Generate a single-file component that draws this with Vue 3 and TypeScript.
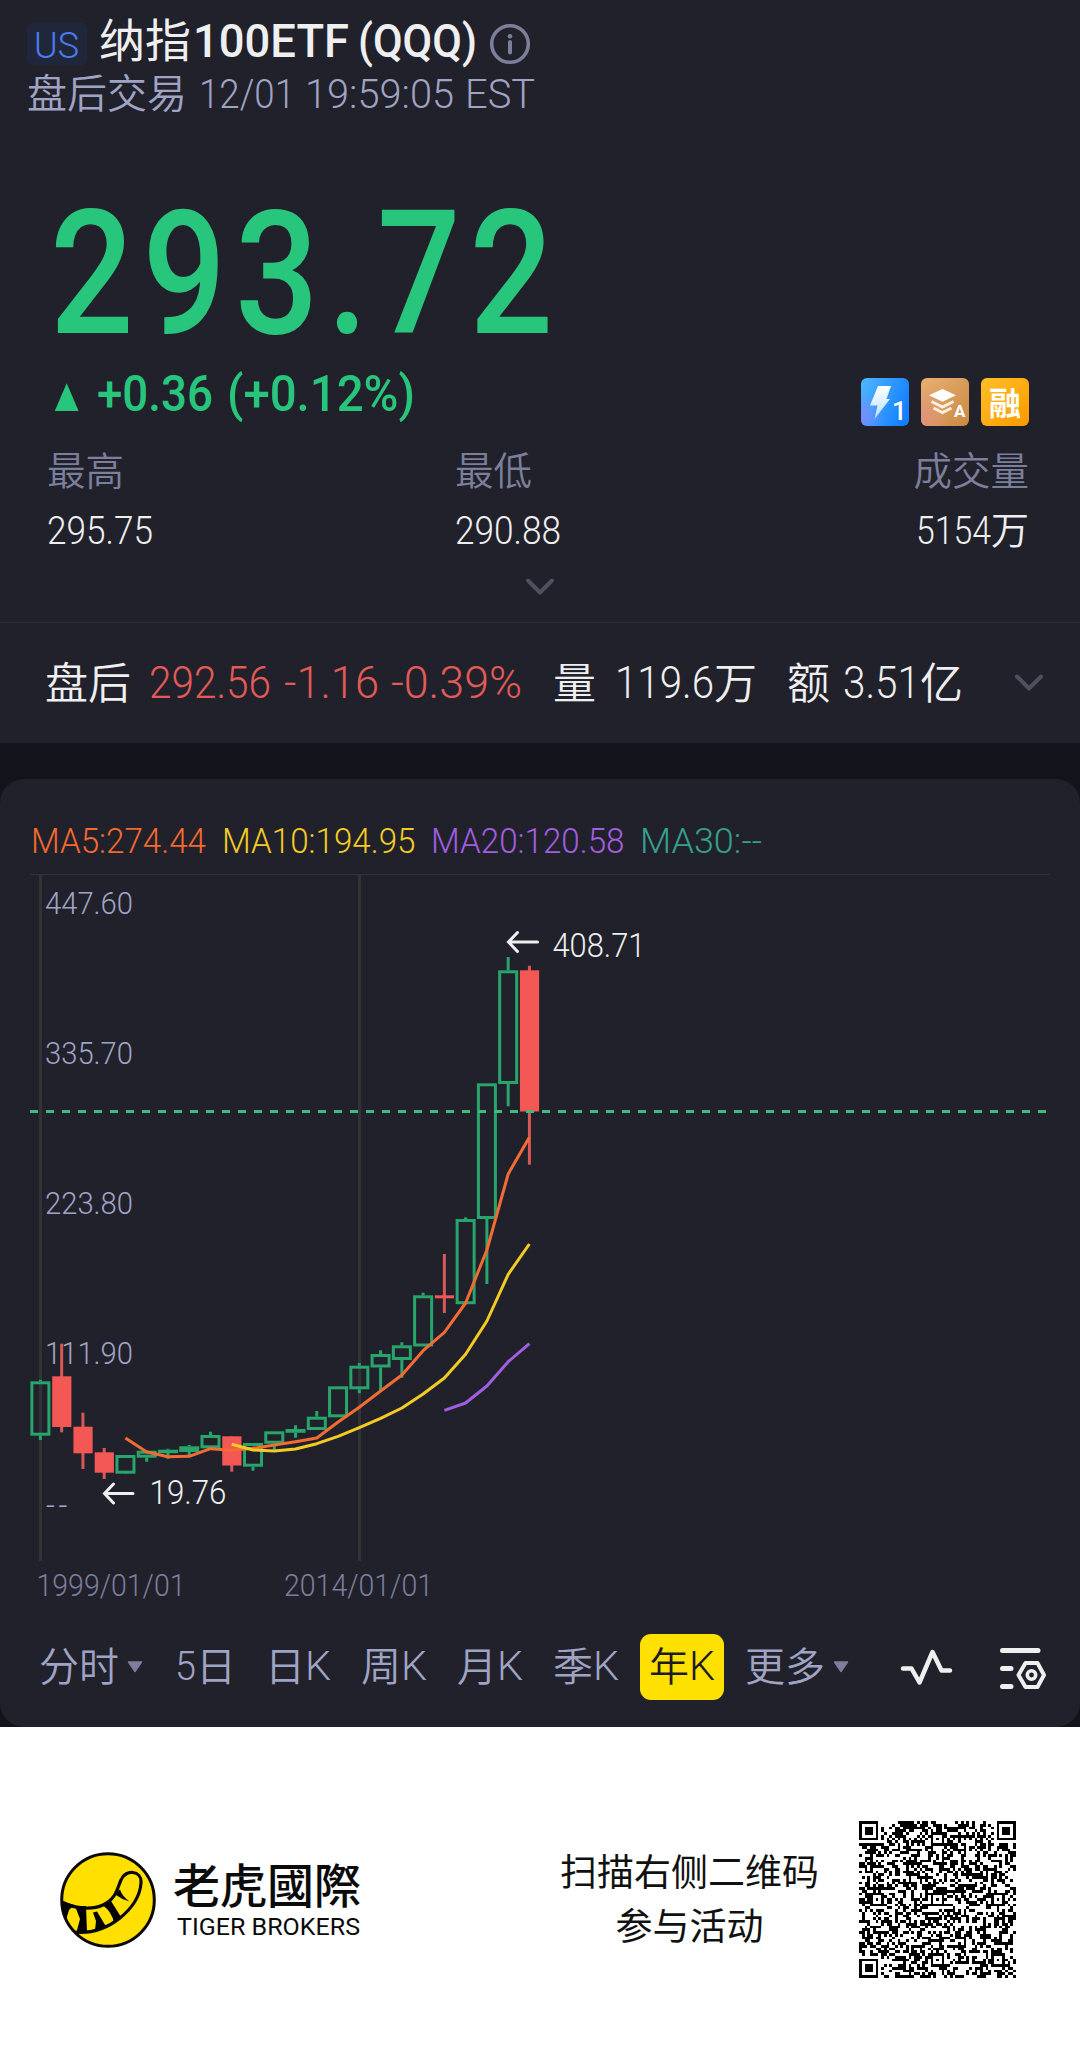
<script setup lang="ts">
import type { Directive } from 'vue'

/* Sets a run of text to an exact advance width by condensing its glyphs. */
const vFit: Directive<HTMLElement, number> = {
  mounted(el, binding) {
    const natural = el.getBoundingClientRect().width
    if (!natural) return
    el.style.transform = `scaleX(${binding.value / natural})`
    el.style.marginRight = `${binding.value - natural}px`
  },
}

const averages = [
  { text: 'MA5:274.44', color: '#f4692f', width: 175 },
  { text: 'MA10:194.95', color: '#f2cc23', width: 193.5 },
  { text: 'MA20:120.58', color: '#a25ee0', width: 193.5 },
  { text: 'MA30:--', color: '#35a08c', width: 122 },
]

const CHART_TOP = 874
const STEP = 21.262
const cx = (i: number) => 40.4 + STEP * i
const cy = (y: number) => y - CHART_TOP

/* [up, body top, body bottom, wick top, wick bottom] */
const candles = [
  [1, 1381.3, 1435.7, 1379.7, 1440],
  [0, 1376.3, 1427, 1343.7, 1432.3],
  [0, 1426.7, 1453.3, 1412.7, 1469],
  [0, 1452.3, 1472.7, 1448, 1479],
  [1, 1455, 1473.7, 1455, 1474],
  [1, 1450.7, 1457.7, 1450, 1461.7],
  [1, 1449.7, 1452.7, 1448.7, 1458.7],
  [1, 1446.3, 1452, 1445, 1457],
  [1, 1435, 1448.3, 1431.7, 1448],
  [0, 1436.3, 1465.5, 1436.3, 1471.7],
  [1, 1443, 1466.7, 1443, 1470.7],
  [1, 1431.3, 1443.7, 1431.3, 1451],
  [1, 1429, 1432.8, 1425.3, 1437.7],
  [1, 1416.7, 1430, 1411, 1430],
  [1, 1386.3, 1417.3, 1386.3, 1417],
  [1, 1365.7, 1389.3, 1363, 1393.3],
  [1, 1354, 1367.5, 1350.3, 1390.7],
  [1, 1345.3, 1360, 1342.3, 1377.7],
  [1, 1295.3, 1346.5, 1292.7, 1346],
  [0, 1295.3, 1298.3, 1254, 1313],
  [1, 1219, 1304.2, 1217.3, 1304],
  [1, 1083.3, 1219, 1083.3, 1284],
  [1, 970.3, 1084, 957, 1106.3],
  [0, 970.3, 1111.5, 965.7, 1164.7],
].map(([up, top, bottom, high, low], i) => ({
  up: up === 1,
  x: cx(i),
  top: cy(top),
  bottom: cy(bottom),
  high: cy(high),
  low: cy(low),
}))

const line = (start: number, ys: number[]) =>
  ys.map((y, k) => `${cx(start + k).toFixed(1)},${cy(y).toFixed(1)}`).join(' ')

const ma5 = line(4, [1438, 1452, 1456.7, 1456.3, 1448.7, 1450.3, 1448.3, 1445, 1441.7, 1438, 1422, 1407.3, 1391, 1375, 1350.7, 1332.3, 1303, 1250, 1174, 1137.3])
const ma10 = line(9, [1444.3, 1450, 1451, 1449, 1443.7, 1436.3, 1427.7, 1418.3, 1408, 1394, 1378, 1354.3, 1321, 1274.3, 1244])
const ma20 = line(19, [1410.3, 1403, 1386, 1361.7, 1343.7])

const priceLabels = ['447.60', '335.70', '223.80', '111.90']

/* QR symbol, version 10: 57 modules per side */
const N = 57
const finder = (r: number, c: number) => {
  const ring = Math.max(Math.abs(r - 3), Math.abs(c - 3))
  return ring === 3 || ring <= 1
}
const qrModule = (r: number, c: number, noise: number): boolean => {
  if (r < 8 && c < 8) return r < 7 && c < 7 && finder(r, c)
  if (r < 8 && c > N - 9) return r < 7 && c > N - 8 && finder(r, c - N + 7)
  if (r > N - 9 && c < 8) return r > N - 8 && c < 7 && finder(r - N + 7, c)
  for (const ar of [6, 28, 50])
    for (const ac of [6, 28, 50]) {
      if ((ar === 6 && ac !== 28) || (ar === 50 && ac === 6)) continue
      const ring = Math.max(Math.abs(r - ar), Math.abs(c - ac))
      if (ring <= 2) return ring !== 1
    }
  if (r === 6) return c % 2 === 0
  if (c === 6) return r % 2 === 0
  return noise > 0.5
}
let seed = 20221201
let qrPath = ''
for (let r = 0; r < N; r++)
  for (let c = 0; c < N; c++) {
    seed = (Math.imul(seed, 1664525) + 1013904223) >>> 0
    if (qrModule(r, c, seed / 4294967296)) qrPath += `M${c} ${r}h1v1h-1z`
  }
</script>

<template>
  <main class="page">
    <section class="quote">
      <div class="title-row">
        <span class="market"><span v-fit="45" class="din">US</span></span>
        <span class="cjk title-cjk">纳指</span>
        <span v-fit="156" class="din title-din">100ETF</span>
        <span v-fit="119" class="din title-din code">(QQQ)</span>
        <svg class="info" width="42" height="42" viewBox="0 0 42 42">
          <circle cx="21" cy="21" r="18.3" fill="none" stroke="#7c7f99" stroke-width="3.6" />
          <circle cx="21" cy="13.2" r="2.3" fill="#7c7f99" />
          <path d="M21 19v10.5" stroke="#7c7f99" stroke-width="4" stroke-linecap="round" />
        </svg>
      </div>
      <div class="time-row">
        <span class="cjk">盘后交易</span>
        <span v-fit="96" class="din">12/01</span>
        <span v-fit="149" class="din clock">19:59:05</span>
        <span v-fit="70" class="din zone">EST</span>
      </div>
      <div class="price"><span v-fit="512" class="din">293.72</span></div>
      <div class="change-row">
        <svg class="up" width="26" height="30" viewBox="0 0 26 30"><path d="M12.7 1.2 L24.4 28.5 Q24.6 29 24 29 H1.4 Q.8 29 1 28.5 Z" fill="#28c67d" /></svg>
        <span v-fit="116" class="din diff">+0.36</span>
        <span v-fit="188" class="din pct">(+0.12%)</span>
        <span class="spacer"></span>
        <span class="badges">
          <svg width="48" height="48" viewBox="0 0 48 48">
            <defs>
              <linearGradient id="blue" x1="0" y1=".2" x2="1" y2=".6"><stop offset="0" stop-color="#4db4ff" /><stop offset="1" stop-color="#147fff" /></linearGradient>
              <radialGradient id="violet" cx="0" cy=".8" r=".5"><stop offset="0" stop-color="#7a8cff" /><stop offset="1" stop-color="#7a8cff" stop-opacity="0" /></radialGradient>
              <linearGradient id="bolt" x1="0" y1="0" x2="0" y2="1"><stop offset="0" stop-color="#fff" /><stop offset="1" stop-color="#b9e0ff" /></linearGradient>
            </defs>
            <rect width="48" height="48" rx="6" fill="url(#blue)" />
            <rect width="48" height="48" rx="6" fill="url(#violet)" />
            <path d="M17 8h13l-4.500 13H29L13.500 41l3-13.500H9z" fill="url(#bolt)" />
            <text x="31" y="42" class="badge-num">1</text>
          </svg>
          <svg width="48" height="48" viewBox="0 0 48 48">
            <defs>
              <linearGradient id="tan" x1="0" y1="0" x2="1" y2="1"><stop offset="0" stop-color="#e8b072" /><stop offset="1" stop-color="#c98a42" /></linearGradient>
              <radialGradient id="rose" cx="0" cy=".8" r=".6"><stop offset="0" stop-color="#e0947c" /><stop offset="1" stop-color="#e0947c" stop-opacity="0" /></radialGradient>
            </defs>
            <rect width="48" height="48" rx="6" fill="url(#tan)" />
            <rect width="48" height="48" rx="6" fill="url(#rose)" />
            <path d="M21.500 11 35 17.200 21.500 23.800 8 17.200Z" fill="#fff" />
            <path d="M10.500 23.500 21.500 29l11-5.500M12.500 30 21.500 34.500l9-4.500" fill="none" stroke="#ffeedd" stroke-width="3" />
            <text x="33" y="39" class="badge-a">A</text>
          </svg>
          <span class="badge-rong">融</span>
        </span>
      </div>
      <div class="stats">
        <div class="stat first"><span class="cjk label">最高</span><span class="value"><span v-fit="106" class="din">295.75</span></span></div>
        <div class="stat"><span class="cjk label">最低</span><span class="value"><span v-fit="106" class="din">290.88</span></span></div>
        <div class="stat end"><span class="cjk label">成交量</span><span class="value"><span v-fit="75" class="din">5154</span><span class="cjk">万</span></span></div>
      </div>
      <svg class="chev" width="32" height="20" viewBox="0 0 32 20"><path d="M4 3.500 16 15.500 28 3.500" /></svg>
    </section>

    <section class="after">
      <span class="cjk">盘后</span>
      <span v-fit="122" class="din red">292.56</span>
      <span v-fit="95" class="din red chg">-1.16</span>
      <span v-fit="131" class="din red rate">-0.39%</span>
      <span class="cjk vol">量</span>
      <span v-fit="99" class="din n1">119.6</span>
      <span class="cjk">万</span>
      <span class="cjk amt">额</span>
      <span v-fit="77" class="din n2">3.51</span>
      <span class="cjk">亿</span>
      <svg class="chev" width="32" height="20" viewBox="0 0 32 20"><path d="M4 3.500 16 15.500 28 3.500" /></svg>
    </section>

    <div class="well">
      <section class="card">
        <div class="legend">
          <span v-for="a in averages" :key="a.text" v-fit="a.width" class="din" :style="{ color: a.color }">{{ a.text }}</span>
        </div>
        <svg class="chart" width="1080" height="738" viewBox="0 0 1080 738">
          <path d="M30 .5H1050" stroke="#2f303c" stroke-width="1.500" />
          <path d="M40.500 1V687M359.500 1V687" stroke="#333335" stroke-width="3" />
          <g class="axis">
            <text v-for="(p, i) in priceLabels" :key="p" x="45" :y="40.3 + 150 * i" textLength="88" lengthAdjust="spacingAndGlyphs">{{ p }}</text>
            <text class="dash" x="46" y="642">--</text>
            <text class="date" x="36.500" y="722" textLength="149" lengthAdjust="spacingAndGlyphs">1999/01/01</text>
            <text class="date" x="284" y="722" textLength="149" lengthAdjust="spacingAndGlyphs">2014/01/01</text>
          </g>
          <g v-for="c in candles" :key="c.x">
            <template v-if="c.up">
              <path :d="`M${c.x} ${c.high}V${c.top}M${c.x} ${c.bottom}V${Math.max(c.low, c.bottom)}`" stroke="#27a56c" stroke-width="3" />
              <rect :x="c.x - 8.500" :y="c.top + 1.500" width="17" :height="Math.max(c.bottom - c.top - 3, 0.500)" fill="none" stroke="#27a56c" stroke-width="3" />
            </template>
            <template v-else>
              <path :d="`M${c.x} ${c.high}V${c.low}`" stroke="#d95757" stroke-width="3" />
              <rect :x="c.x - 9.500" :y="c.top" width="19.200" :height="c.bottom - c.top" fill="#f35855" />
            </template>
          </g>
          <path d="M30 237.500H1047" stroke="#3cba80" stroke-width="3" stroke-dasharray="8 8" />
          <g fill="none" stroke-width="3" stroke-linejoin="round">
            <polyline :points="ma5" stroke="#f26c34" />
            <polyline :points="ma10" stroke="#f2cc23" />
            <polyline :points="ma20" stroke="#a25ee0" />
          </g>
          <g class="marks">
            <path d="M537.500 68H509M517.500 58.500 508.500 68 517.500 77.500M133 619.500H105M113.500 610 104.500 619.500 113.500 629" />
            <text x="552.500" y="83" textLength="93" lengthAdjust="spacingAndGlyphs">408.71</text>
            <text x="149.500" y="629.500" textLength="77" lengthAdjust="spacingAndGlyphs">19.76</text>
          </g>
        </svg>
        <nav class="tabs">
          <span class="tab t0"><span class="cjk">分时</span><svg width="16" height="12" viewBox="0 0 16 12"><path d="M1.500 1h13L8 10.500z" class="tri" /></svg></span>
          <span class="tab t1"><span v-fit="21" class="din">5</span><span class="cjk">日</span></span>
          <span class="tab t2"><span class="cjk">日</span><span v-fit="26" class="din">K</span></span>
          <span class="tab t3"><span class="cjk">周</span><span v-fit="26" class="din">K</span></span>
          <span class="tab t4"><span class="cjk">月</span><span v-fit="26" class="din">K</span></span>
          <span class="tab t5"><span class="cjk">季</span><span v-fit="26" class="din">K</span></span>
          <span class="tab on"><span class="cjk">年</span><span v-fit="26" class="din">K</span></span>
          <span class="tab t7"><span class="cjk">更多</span><svg width="16" height="12" viewBox="0 0 16 12"><path d="M1.500 1h13L8 10.500z" class="tri" /></svg></span>
          <svg class="pulse" width="54" height="40" viewBox="0 0 54 40"><path d="M3 20.500H11.500L19.500 34.500 32.500 4 41.500 22.500H50" /></svg>
          <svg class="gear" width="50" height="46" viewBox="0 0 50 46">
            <path d="M4.500 4.500H40M4.500 22.500H13M4.500 40.500H13" stroke-width="5" />
            <path d="M27.500 17H39.500L46 29 39.500 41H27.500L20.500 29Z" stroke-width="4" />
            <circle cx="33.500" cy="29" r="4.200" stroke-width="3.600" />
          </svg>
        </nav>
      </section>
    </div>

    <footer class="footer">
      <svg class="logo" width="96" height="96" viewBox="0 0 96 96">
        <clipPath id="disc"><circle cx="48" cy="48" r="46" /></clipPath>
        <circle cx="48" cy="48" r="46.300" fill="#ffe000" stroke="#0a0a0a" stroke-width="3" />
        <g clip-path="url(#disc)">
          <path d="M0 49C14 57 32 58 43 53C56 47 57 37 61 28C65 17 82 18 81 31C80 45 71 57 60 66C45 78 30 82 13 80" fill="none" stroke="#0a0a0a" stroke-width="3.200" />
          <path d="M0 48 14 53 9 58 6 68 0 62Z" />
          <path d="M15 54H26L27 80H16.500L20 67Z" />
          <path d="M33 60.500 37 59.500 46 74.500 35 78.500 36 69Z" />
          <path d="M43 53.500 51 49 61 65 54 70Q51 59 43 53.500Z" />
          <path d="M57 39.500 60 37.500Q62 44 69.500 49.500Q62 47.500 56 43Z" />
        </g>
      </svg>
      <div class="brand">
        <span class="brand-cjk">老虎國際</span>
        <span class="brand-en"><span v-fit="183">TIGER BROKERS</span></span>
      </div>
      <div class="scan"><span>扫描右侧二维码</span><span>参与活动</span></div>
      <svg class="qr" width="157" height="157" viewBox="0 0 57 57" shape-rendering="crispEdges"><path :d="qrPath" fill="#000" /></svg>
    </footer>
  </main>
</template>

<style>
body { margin: 0; background: #fff; }
</style>

<style scoped>
.page { width: 1080px; height: 2072px; overflow: hidden; background: #fff; font-family: Roboto, "Noto Sans CJK SC", sans-serif; color: #efeff0; }
.din { display: inline-block; flex: none; transform-origin: 0 50%; white-space: nowrap; font-family: Roboto, sans-serif; font-weight: 350; line-height: 1; }
.cjk { flex: none; white-space: nowrap; font-family: "Noto Sans CJK SC", sans-serif; font-weight: 350; line-height: 1; }
.quote { height: 623px; background: #21212b; display: flex; flex-direction: column; box-sizing: border-box; border-bottom: 1.5px solid #2d2e3a; }
.title-row { display: flex; align-items: flex-start; height: 68px; padding-left: 27px; box-sizing: border-box; flex: none; }
.market { width: 60px; height: 42px; margin-top: 23px; border-radius: 5px; background: #21273b; display: flex; align-items: center; justify-content: center; box-sizing: border-box; padding-right: 2px; font-size: 37px; color: #4a7cf0; }
.market .din { margin-top: 2px; }
.title-cjk { margin: 14px 0 0 12px; font-size: 46px; font-weight: 400; }
.title-din { margin: 18px 0 0 2px; font-size: 46px; font-weight: 500; }
.code { margin-left: 9px; }
.info { margin: 23px 0 0 12px; flex: none; }
.time-row { display: flex; align-items: center; height: 50px; padding-left: 27px; color: #a0a4c4; }
.time-row .cjk { font-size: 40px; margin-top: -4px; }
.time-row .din { margin: 2px 0 0 12px; font-size: 41px; }
.time-row .clock { margin-left: 10px; }
.time-row .zone { margin-left: 11px; }
.price { height: 258px; padding: 54px 0 0 50px; box-sizing: border-box; display: flex; align-items: center; color: #28c67d; font-size: 173px; }
.price .din { font-weight: 550; letter-spacing: .06em; }
.change-row { display: flex; align-items: center; height: 52px; padding: 0 51px 0 54px; color: #28c67d; font-size: 50px; }
.change-row .din { font-weight: 500; margin-top: -16px; }
.change-row .diff { margin-left: 17px; }
.change-row .pct { margin-left: 14px; }
.up { margin-top: -10px; }
.spacer { flex: 1; }
.badges { display: flex; gap: 12px; }
.badge-num { font: 500 26px Roboto, sans-serif; fill: #fff; }
.badge-a { font: 700 17px Roboto, sans-serif; fill: #fff; }
.badge-rong { width: 48px; height: 48px; border-radius: 6px; background: linear-gradient(135deg, #ffbf27, #fa9a00); color: #fff; font: 700 32px/46px "Noto Sans CJK SC", sans-serif; text-align: center; }
.stats { display: flex; padding: 13px 51px 0 47px; height: 120px; box-sizing: content-box; }
.stat { display: flex; flex-direction: column; font-size: 38px; }
.first { width: 408px; }
.label { height: 54px; line-height: 54px; color: #7c7f9c; font-size: 38.500px; }
.value { display: flex; align-items: center; height: 71px; flex: none; }
.value .cjk { margin-top: -5px; }
.end { align-items: flex-end; margin-left: auto; }
.chev { align-self: center; fill: none; stroke: #4e5060; stroke-width: 4; stroke-linecap: round; stroke-linejoin: round; flex: none; }
.quote > .chev { margin-top: 16px; }
.after { height: 120px; display: flex; align-items: center; background: #21212b; padding-left: 45px; font-size: 43.500px; box-sizing: border-box; }
.after .cjk { font-size: 43px; margin-top: -5px; }
.after .din { margin-top: 2px; }
.red { color: #e25b58; margin-left: 18px; }
.chg { margin-left: 13px; }
.rate { margin-left: 12px; }
.vol { margin-left: 31px; }
.n1 { margin-left: 19px; }
.amt { margin-left: 30px; }
.n2 { margin-left: 13px; }
.after .chev { margin-left: 50px; }
.well { background: #13131c; padding-top: 36px; height: 984px; box-sizing: border-box; }
.card { height: 948px; border-radius: 24px; background: #21212b; overflow: hidden; }
.legend { height: 95px; padding: 30px 0 0 31px; box-sizing: border-box; display: flex; align-items: center; gap: 15.500px; font-size: 34.500px; }
.chart { display: block; }
.axis text { font: 350 31px Roboto, sans-serif; fill: #a0a4c4; }
.axis .dash { letter-spacing: 3.500px; }
.axis .date { fill: #7c7f9c; }
.marks path { fill: none; stroke: #efeff0; stroke-width: 3; stroke-linecap: round; }
.marks text { font: 350 34px Roboto, sans-serif; fill: #efeff0; }
.tabs { display: flex; align-items: center; height: 110px; padding-left: 39px; color: #a0a4c4; font-size: 40px; }
.tab { display: flex; align-items: center; flex: none; height: 66px; }
.tab .cjk { font-size: 40px; margin-top: -6px; }
.tab svg { margin-left: 8px; }
.tri { fill: #7c7f9c; stroke: #7c7f9c; stroke-width: 1.500; stroke-linejoin: round; }
.t0 { width: 136px; }
.t1 { width: 90px; }
.t2 { width: 96px; }
.t3 { width: 96px; }
.t4 { width: 96px; }
.t5 { width: 87px; }
.on { width: 84px; background: #ffe100; color: #1c1c20; border-radius: 11px; justify-content: center; }
.t7 { margin-left: 21px; width: 155px; }
.pulse, .gear { flex: none; fill: none; stroke: #efeff0; stroke-width: 4.500; stroke-linecap: round; stroke-linejoin: round; }
.pulse { margin-top: 2px; }
.gear { margin: 4px 0 0 44px; }
.footer { height: 345px; display: flex; align-items: flex-start; padding-left: 60px; box-sizing: border-box; }
.logo { margin-top: 125px; flex: none; }
.brand { margin: 129px 0 0 17px; width: 190px; display: flex; flex-direction: column; color: #0b0b0b; }
.brand-cjk { font: 500 47px/54px "Noto Sans CJK TC", sans-serif; white-space: nowrap; }
.brand-en { font: 400 23.500px/28px Roboto, sans-serif; margin: 3px 0 0 4px; white-space: nowrap; }
.brand-en span { display: inline-block; transform-origin: 0 50%; }
.scan { margin: 116px 0 0 197px; width: 259px; display: flex; flex-direction: column; align-items: center; color: #111; font: 400 37px/54px "Noto Sans CJK SC", sans-serif; white-space: nowrap; }
.qr { margin: 93.500px 0 0 39.500px; flex: none; }
</style>
